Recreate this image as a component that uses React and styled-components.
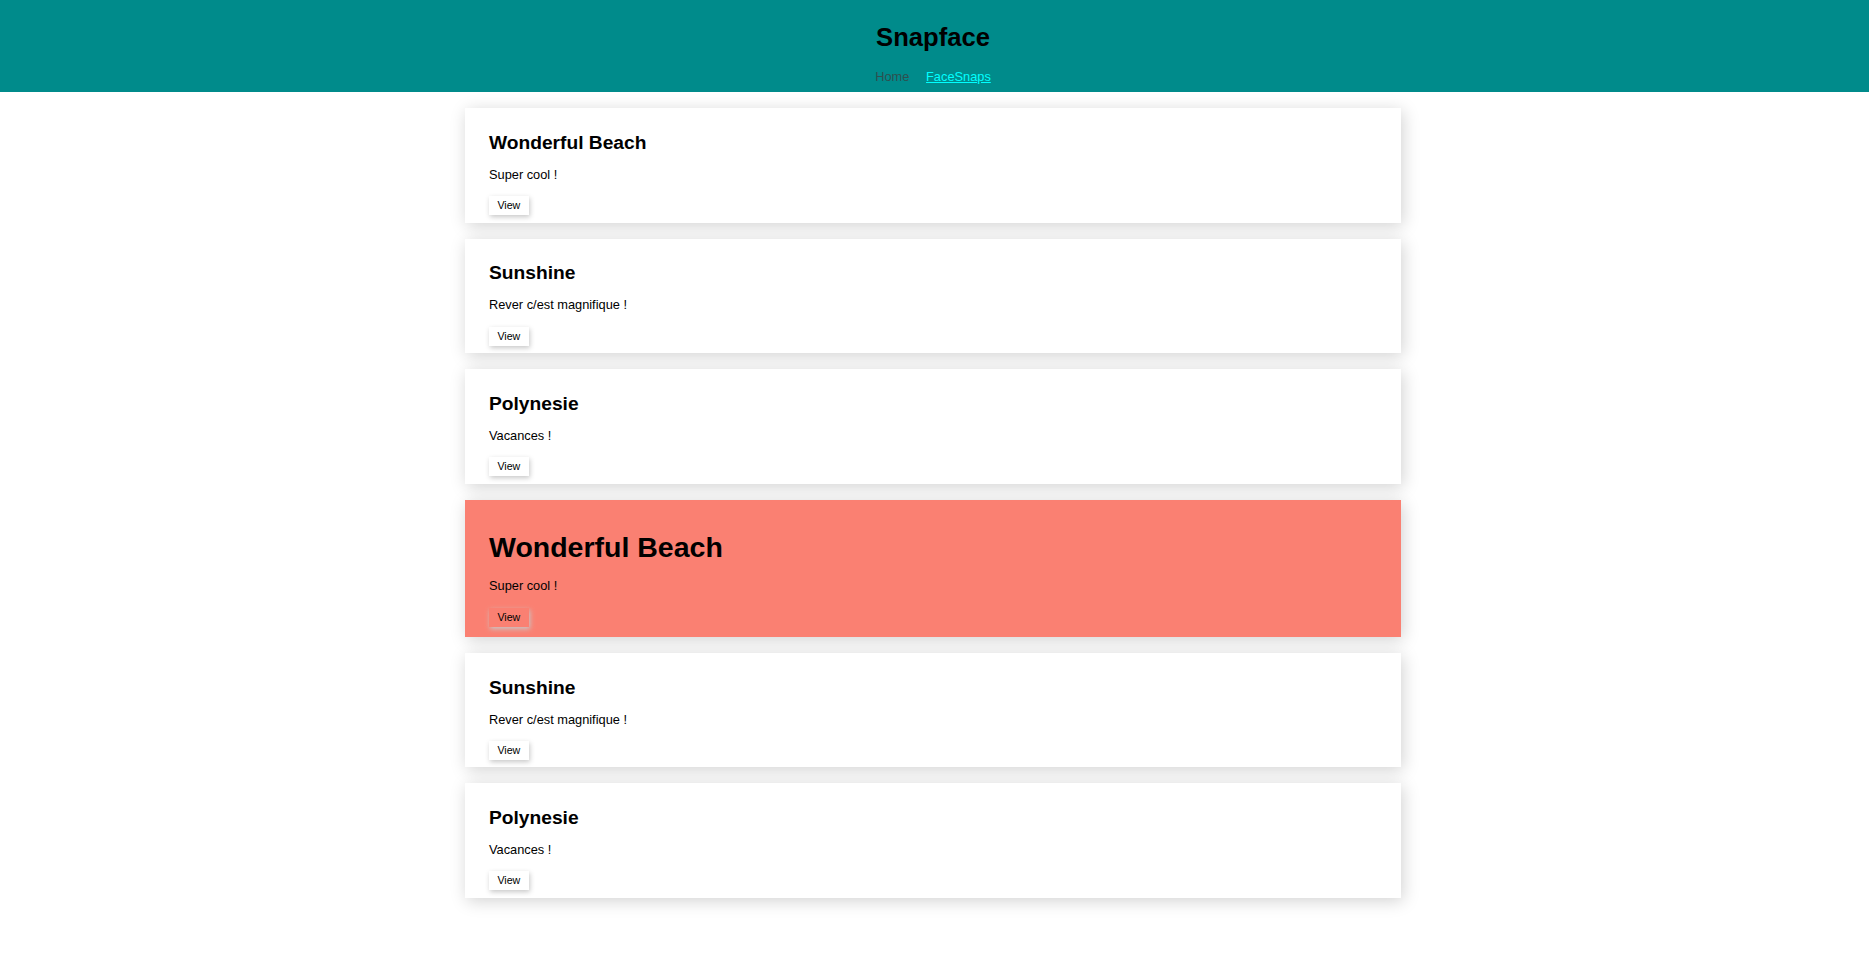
import React from "react";
import styled, { createGlobalStyle } from "styled-components";

const Global = createGlobalStyle`
  html, body { margin: 0; padding: 0; background: #fff; }
  body { font-family: "Liberation Sans", Arial, sans-serif; color: #000; }
`;

const Header = styled.header`
  background: #008b8b;
  padding: 23px 3px 7.4px 0;
  display: flex;
  flex-direction: column;
  align-items: center;
`;

const Brand = styled.h1`
  margin: 0;
  font-size: 25.6px;
  line-height: 29.4px;
  font-weight: 700;
  color: #000;
`;

const Nav = styled.nav`
  margin-top: 17.5px;
  display: flex;
  gap: 16.7px;
  font-size: 12.8px;
  line-height: 14.7px;
`;

const NavLink = styled.a`
  color: ${(p) => (p.$active ? "#00ffff" : "#2f4f4f")};
  text-decoration: ${(p) => (p.$active ? "underline" : "none")};
  cursor: pointer;
`;

const List = styled.main`
  padding: 16px 3px 40px 0;
  display: flex;
  flex-direction: column;
  align-items: center;
  gap: 16px;
`;

const Card = styled.article`
  box-sizing: border-box;
  width: 936px;
  padding: 8px 24px ${(p) => (p.$highlight ? "9.4px" : "7.2px")};
  background: ${(p) => (p.$highlight ? "#fa8072" : "#fff")};
  box-shadow: 2px 3px 16px rgba(0, 0, 0, 0.18);
`;

const Title = styled.h2`
  margin: ${(p) => (p.$big ? "23.5px" : "15.9px")} 0 0;
  font-size: ${(p) => (p.$big ? "28.5px" : "19.2px")};
  line-height: 1.149;
  font-weight: 700;
`;

const Description = styled.p`
  margin: ${(p) => (p.$big ? "15.4px 0 14px" : "14px 0 13.4px")};
  font-size: 12.8px;
  line-height: 14.7px;
`;

const Actions = styled.div`
  display: flex;
`;

const ViewButton = styled.button`
  font-family: "Liberation Sans", Arial, sans-serif;
  font-size: 10.67px;
  color: #000;
  background: transparent;
  border: none;
  height: 19.3px;
  line-height: 19.3px;
  padding: 0 8.4px;
  box-shadow: 1px 2px 5px #c8c8c8;
  cursor: pointer;
`;

const snaps = [
  { title: "Wonderful Beach", description: "Super cool !" },
  { title: "Sunshine", description: "Rever c/est magnifique !" },
  { title: "Polynesie", description: "Vacances !" },
  { title: "Wonderful Beach", description: "Super cool !", highlight: true },
  { title: "Sunshine", description: "Rever c/est magnifique !" },
  { title: "Polynesie", description: "Vacances !" },
];

export default function App() {
  return (
    <>
      <Global />
      <Header>
        <Brand>Snapface</Brand>
        <Nav>
          <NavLink>Home</NavLink>
          <NavLink $active>FaceSnaps</NavLink>
        </Nav>
      </Header>
      <List>
        {snaps.map((s, i) => (
          <Card key={i} $highlight={s.highlight}>
            <Title $big={s.highlight}>{s.title}</Title>
            <Description $big={s.highlight}>{s.description}</Description>
            <Actions>
              <ViewButton>View</ViewButton>
            </Actions>
          </Card>
        ))}
      </List>
    </>
  );
}
